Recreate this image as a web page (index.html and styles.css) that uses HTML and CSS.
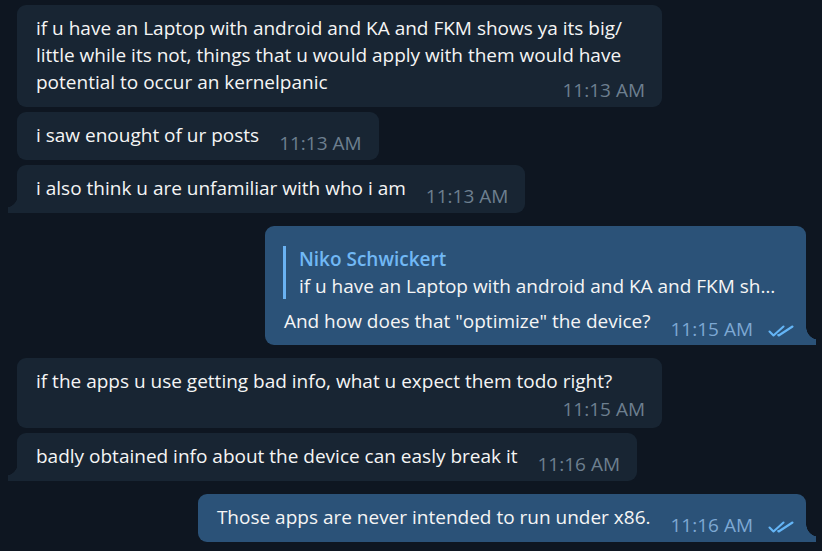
FILE: index.html
```html
<!DOCTYPE html>
<html lang="en">
<head>
<meta charset="utf-8">
<title>Chat</title>
<link rel="stylesheet" href="styles.css">
</head>
<body>
<div class="chat">
  <div class="group">
    <div class="bubble in">if u have an Laptop with android and KA and FKM shows ya its big/ little while its not, things that u would apply with them would have potential to occur an kernelpanic<span class="time">11:13 AM</span></div>
    <div class="bubble in">i saw enought of ur posts<span class="time">11:13 AM</span></div>
    <div class="bubble in tail">i also think u are unfamiliar with who i am<span class="time">11:13 AM</span></div>
  </div>
  <div class="group">
    <div class="bubble out tail reply-bubble">
      <div class="reply">
        <div class="reply-name">Niko Schwickert</div>
        <div class="reply-text">if u have an Laptop with android and KA and FKM shows ya its big/ little while its not</div>
      </div>
      And how does that "optimize" the device?<span class="time">11:15 AM<svg class="checks" viewBox="0 0 26 12" width="26" height="12"><path d="M1.5 6.5 L5.5 10.5 L15.5 1.5" /><path d="M10.2 10 L10.7 10.5 L24.5 1.5" /></svg></span>
    </div>
  </div>
  <div class="group">
    <div class="bubble in">if the apps u use getting bad info, what u expect them todo right?<span class="time wrap">11:15 AM</span></div>
    <div class="bubble in tail">badly obtained info about the device can easly break it<span class="time">11:16 AM</span></div>
  </div>
  <div class="group">
    <div class="bubble out tail">Those apps are never intended to run under x86.<span class="time">11:16 AM<svg class="checks" viewBox="0 0 26 12" width="26" height="12"><path d="M1.5 6.5 L5.5 10.5 L15.5 1.5" /><path d="M10.2 10 L10.7 10.5 L24.5 1.5" /></svg></span></div>
  </div>
</div>
</body>
</html>
```

FILE: styles.css
```css
html, body {
  margin: 0;
  padding: 0;
  background: #0e1621;
}

body {
  width: 822px;
  height: 551px;
  overflow: hidden;
  font-family: "Open Sans", "DejaVu Sans", sans-serif;
  color: #f5f5f5;
}

.chat {
  display: flex;
  flex-direction: column;
  gap: 13px;
  padding-top: 5px;
}

.group {
  display: flex;
  flex-direction: column;
  gap: 5px;
}

.bubble {
  position: relative;
  display: flow-root;
  width: fit-content;
  max-width: 645px;
  box-sizing: border-box;
  font-size: 19px;
  line-height: 27px;
  padding: 10px 17px 11px 19px;
  border-radius: 9px;
}

.bubble.in {
  background: #182533;
  margin-left: 17px;
}

.bubble.out {
  background: #2b5278;
  margin-left: auto;
  margin-right: 16px;
  padding-right: 12px;
}

.bubble.reply-bubble {
  padding-bottom: 10px;
}

.bubble.in.tail {
  border-bottom-left-radius: 0;
}

.bubble.out.tail {
  border-bottom-right-radius: 0;
}

.bubble.in.tail::before {
  content: "";
  position: absolute;
  left: -9px;
  bottom: 0;
  width: 9px;
  height: 17px;
  background: radial-gradient(circle at -3px -1px, transparent 12.5px, #182533 13px);
}

.bubble.out.tail::after {
  content: "";
  position: absolute;
  right: -10px;
  bottom: 0;
  width: 10px;
  height: 17px;
  background: radial-gradient(circle at 13px -1px, transparent 12.5px, #2b5278 13px);
}

.time {
  float: right;
  margin: 8px 0 -8px 20px;
  color: #6d7f8f;
  font-size: 19px;
  line-height: 27px;
  white-space: nowrap;
}

.time.wrap {
  margin-top: 1px;
  margin-bottom: -6px;
}

.out .time {
  color: #7da8d3;
}

.checks {
  margin-left: 15px;
  vertical-align: -1px;
  fill: none;
  stroke: #64b5f6;
  stroke-width: 2.1;
  stroke-linecap: round;
  stroke-linejoin: round;
}

.reply {
  contain: inline-size;
  margin: 10px 15px 9px -1px;
  padding-left: 13px;
  border-left: 3px solid #6ab2f2;
  line-height: 26.5px;
}

.reply-name {
  color: #71b8f5;
  font-weight: 600;
}

.reply-text {
  white-space: nowrap;
  overflow: hidden;
  text-overflow: ellipsis;
}
```
